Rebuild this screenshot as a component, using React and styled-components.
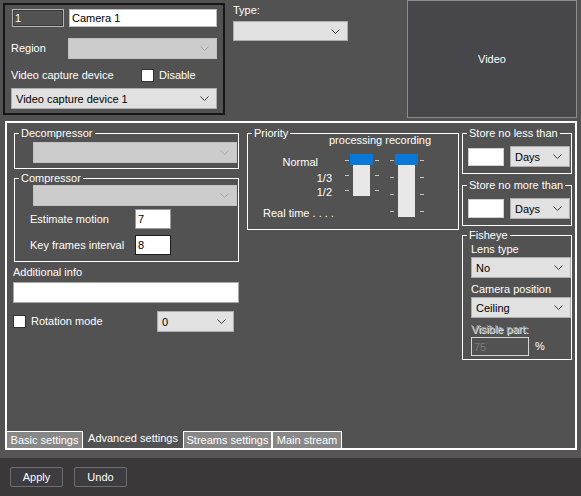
import React from 'react'
import styled, { createGlobalStyle } from 'styled-components'

const GlobalStyle = createGlobalStyle`
  html, body {
    margin: 0;
    padding: 0;
    background: #525252;
  }
  body {
    font-family: "Liberation Sans", Arial, sans-serif;
    font-size: 11px;
    color: #fff;
  }
`

const Window = styled.div`
  width: 581px;
  height: 496px;
  display: flex;
  flex-direction: column;
  background: #525252;
  overflow: hidden;
`

/* ---- top bar ---- */

const TopBar = styled.div`
  height: 121px;
  flex-shrink: 0;
  display: flex;
  align-items: flex-start;
`

const CameraBox = styled.div`
  margin: 3px 0 0 3px;
  width: 222px;
  height: 112px;
  box-sizing: border-box;
  border: 2px solid #161616;
  padding: 4px 6px 0 6px;
  display: flex;
  flex-direction: column;
`

const Row = styled.div`
  display: flex;
  align-items: center;
  margin-top: ${p => p.$mt || 0}px;
  justify-content: ${p => (p.$between ? 'space-between' : 'flex-start')};
`

const TypeBlock = styled.div`
  margin-left: 8px;
  padding-top: 4px;
  display: flex;
  flex-direction: column;
`

const VideoBox = styled.div`
  margin: 0 4px 0 auto;
  width: 170px;
  height: 118px;
  box-sizing: border-box;
  border: 1px solid #8b8b90;
  background: #47464b;
  display: flex;
  align-items: center;
  justify-content: center;
`

/* ---- generic controls ---- */

const Label = styled.div`
  line-height: 13px;
  white-space: nowrap;
  width: ${p => (p.$w ? `${p.$w}px` : 'auto')};
  margin-top: ${p => p.$mt || 0}px;
  margin-left: ${p => p.$ml || 0}px;
  color: ${p => (p.$disabled ? '#a3a3a3' : '#fff')};
  text-shadow: ${p => (p.$disabled ? '1px 1px 0 #f4f4f4' : 'none')};
`

const TextBox = styled.div`
  box-sizing: border-box;
  width: ${p => p.$w}px;
  height: ${p => p.$h || 20}px;
  margin-left: ${p => p.$ml || 0}px;
  margin-top: ${p => p.$mt || 0}px;
  padding-left: 2px;
  display: flex;
  align-items: center;
  background: ${p => (p.$tone === 'dark' ? 'transparent' : '#fff')};
  color: ${p => (p.$tone === 'dark' ? '#fff' : '#000')};
  border: 1px solid ${p => p.$border || '#a0a0a0'};
  box-shadow: ${p => (p.$tone === 'dark' ? 'inset 0 0 0 1px #3a3a3a' : 'none')};
  flex-shrink: 0;
`

const DisabledBox = styled(TextBox)`
  background: transparent;
  color: #7b7b7b;
  border-color: #d6d6d6;
  box-shadow: none;
`

const CheckBox = styled.div`
  width: 13px;
  height: 13px;
  box-sizing: border-box;
  background: #fff;
  border: 1px solid #333;
  flex-shrink: 0;
`

const SelectBox = styled.div`
  box-sizing: border-box;
  width: ${p => p.$w}px;
  height: ${p => p.$h || 21}px;
  margin-top: ${p => p.$mt || 0}px;
  margin-left: ${p => (p.$ml === 'auto' ? 'auto' : `${p.$ml || 0}px`)};
  margin-right: ${p => p.$mr || 0}px;
  padding: 0 7px 0 4px;
  display: flex;
  align-items: center;
  justify-content: space-between;
  background: ${p => (p.$disabled ? '#cccccc' : '#e1e1e1')};
  border: 1px solid ${p => (p.$disabled ? '#c2c2c2' : '#adadad')};
  color: #000;
  flex-shrink: 0;
  white-space: nowrap;
`

const Chevron = ({ disabled }) => (
  <svg width="9" height="5" viewBox="0 0 9 5">
    <polyline
      points="0.5,0.5 4.5,4.5 8.5,0.5"
      fill="none"
      stroke={disabled ? '#a8a8a8' : '#3c3c3c'}
      strokeWidth="1"
    />
  </svg>
)

function Dropdown({ value, disabled, ...rest }) {
  return (
    <SelectBox $disabled={disabled} {...rest}>
      <span>{value}</span>
      <Chevron disabled={disabled} />
    </SelectBox>
  )
}

/* ---- settings panel ---- */

const MainPanel = styled.div`
  margin: 0 4px 0 5px;
  height: 329px;
  flex-shrink: 0;
  box-sizing: border-box;
  border: 2px solid #fff;
  display: flex;
  flex-direction: column;
`

const Content = styled.div`
  flex: 1;
  display: flex;
  align-items: flex-start;
  padding: 10px 0 0 6px;
`

const Column = styled.div`
  width: ${p => p.$w}px;
  margin-left: ${p => p.$ml || 0}px;
  display: flex;
  flex-direction: column;
`

const GroupBox = styled.div`
  border: 1px solid #fff;
  display: flex;
  flex-direction: column;
  margin-top: ${p => p.$mt || 0}px;
  margin-left: ${p => p.$ml || 0}px;
`

const Legend = styled.div`
  align-self: flex-start;
  margin: -7px 0 0 4px;
  padding: 0 2px;
  line-height: 13px;
  background: #525252;
  white-space: nowrap;
`

const GroupBody = styled.div`
  display: flex;
  flex-direction: column;
  align-items: flex-start;
  padding: ${p => p.$pad || '0'};
`

const SliderHeader = styled.div`
  margin-top: -6px;
  padding-left: 81px;
  line-height: 13px;
  white-space: nowrap;
`

const SliderArea = styled.div`
  margin-top: 7px;
  display: flex;
  align-items: flex-start;
`

const ScaleLabels = styled.div`
  width: 97px;
  display: flex;
  flex-direction: column;
`

const ScaleLabel = styled.div`
  line-height: 14px;
  margin-top: ${p => p.$mt || 0}px;
  text-align: ${p => (p.$left ? 'left' : 'right')};
  padding: ${p => (p.$left ? '0 0 0 15px' : `0 ${p.$pr}px 0 0`)};
  white-space: nowrap;
`

const SliderBody = styled.div`
  height: ${p => p.$h}px;
  margin-left: ${p => p.$ml || 0}px;
  display: flex;
`

const Ticks = styled.div`
  width: 4px;
  box-sizing: border-box;
  padding: 6px 0 5px;
  display: flex;
  flex-direction: column;
  justify-content: space-between;

  span {
    display: block;
    height: 1px;
    background: #c6c6c6;
  }
`

const Well = styled.div`
  width: 23px;
  margin: 0 2px 0 1px;
  display: flex;
  flex-direction: column;
  align-items: center;
`

const Thumb = styled.div`
  width: 23px;
  height: 11px;
  background: #0a78d6;
`

const Track = styled.div`
  width: 17px;
  flex: 1;
  background: #e8e8e8;
`

function Slider({ height, ticks, ml }) {
  const marks = Array.from({ length: ticks }, (_, i) => <span key={i} />)
  return (
    <SliderBody $h={height} $ml={ml}>
      <Ticks>{marks}</Ticks>
      <Well>
        <Thumb />
        <Track />
      </Well>
      <Ticks>{marks}</Ticks>
    </SliderBody>
  )
}

const FieldRow = styled.div`
  align-self: stretch;
  display: flex;
  align-items: center;
  gap: ${p => p.$gap || 0}px;
  margin-top: ${p => p.$mt || 0}px;
`

const TabBar = styled.div`
  display: flex;
  align-items: flex-end;
  flex-shrink: 0;
`

const Tab = styled.div`
  box-sizing: border-box;
  width: ${p => p.$w}px;
  height: 17px;
  border: 1px solid ${p => (p.$active ? 'transparent' : '#fff')};
  border-bottom: none;
  background: ${p => (p.$active ? 'transparent' : '#878787')};
  text-align: center;
  line-height: ${p => (p.$active ? '12px' : '16px')};
  white-space: nowrap;

  &:first-child {
    border-left: none;
  }
`

/* ---- footer ---- */

const Strip = styled.div`
  height: 8px;
  flex-shrink: 0;
  background: #575555;
`

const Footer = styled.div`
  flex: 1;
  background: #3a3839;
  display: flex;
  align-items: flex-start;
  gap: 11px;
  padding: 9px 0 0 10px;
`

const Button = styled.div`
  box-sizing: border-box;
  width: 53px;
  height: 20px;
  border: 1px solid #6e6e72;
  border-radius: 2px;
  background: #3d3c41;
  display: flex;
  align-items: center;
  justify-content: center;
`

export default function App() {
  return (
    <Window>
      <GlobalStyle />
      <TopBar>
        <CameraBox>
          <Row>
            <TextBox $w={52} $h={18} $ml={1} $tone="dark" $border="#b4b4b4">1</TextBox>
            <TextBox $w={148} $h={18} $ml={5} $border="#bdbdbd">Camera 1</TextBox>
          </Row>
          <Row $mt={11} $between>
            <Label>Region</Label>
            <Dropdown disabled $w={149} />
          </Row>
          <Row $mt={10}>
            <Label $w={130}>Video capture device</Label>
            <CheckBox />
            <Label $ml={5}>Disable</Label>
          </Row>
          <Row $mt={6}>
            <Dropdown value="Video capture device 1" $w={206} />
          </Row>
        </CameraBox>

        <TypeBlock>
          <Label>Type:</Label>
          <Dropdown $w={115} $h={20} $mt={4} />
        </TypeBlock>

        <VideoBox>Video</VideoBox>
      </TopBar>

      <MainPanel>
        <Content>
          <Column $w={226}>
            <GroupBox $ml={1}>
              <Legend>Decompressor</Legend>
              <GroupBody $pad="2px 1px 5px 18px">
                <Dropdown disabled $w={204} />
              </GroupBody>
            </GroupBox>
            <GroupBox $ml={1} $mt={9}>
              <Legend>Compressor</Legend>
              <GroupBody $pad="0 1px 6px 15px">
                <Dropdown disabled $w={204} $ml={3} />
                <FieldRow $mt={3}>
                  <Label $w={105}>Estimate motion</Label>
                  <TextBox $w={36} $border="#9a9a9a">7</TextBox>
                </FieldRow>
                <FieldRow $mt={6}>
                  <Label $w={105}>Key frames interval</Label>
                  <TextBox $w={36} $border="#1e1e1e">8</TextBox>
                </FieldRow>
              </GroupBody>
            </GroupBox>
            <Label $mt={4}>Additional info</Label>
            <TextBox $w={226} $h={21} $mt={3} $border="#a8a8a8" />
            <FieldRow $mt={8}>
              <CheckBox />
              <Label $ml={5}>Rotation mode</Label>
              <Dropdown value="0" $w={77} $ml="auto" $mr={5} />
            </FieldRow>
          </Column>

          <Column $w={212} $ml={8}>
            <GroupBox>
              <Legend>Priority</Legend>
              <GroupBody $pad="0 0 9px 0">
                <SliderHeader>processing recording</SliderHeader>
                <SliderArea>
                  <ScaleLabels>
                    <ScaleLabel $mt={1} $pr={27}>Normal</ScaleLabel>
                    <ScaleLabel $mt={2} $pr={13}>1/3</ScaleLabel>
                    <ScaleLabel $pr={13}>1/2</ScaleLabel>
                    <ScaleLabel $mt={7} $left>Real time . . . .</ScaleLabel>
                  </ScaleLabels>
                  <Slider height={42} ticks={3} />
                  <Slider height={63} ticks={4} ml={11} />
                </SliderArea>
              </GroupBody>
            </GroupBox>
          </Column>

          <Column $w={110} $ml={3}>
            <GroupBox>
              <Legend>Store no less than</Legend>
              <GroupBody $pad="0 1px 6px 5px">
                <FieldRow $mt={6} $gap={6}>
                  <TextBox $w={36} $h={18} $border="#d0d0d0" />
                  <Dropdown value="Days" $w={60} />
                </FieldRow>
              </GroupBody>
            </GroupBox>
            <GroupBox $mt={11}>
              <Legend>Store no more than</Legend>
              <GroupBody $pad="0 1px 6px 5px">
                <FieldRow $mt={6} $gap={6}>
                  <TextBox $w={36} $h={19} $border="#d0d0d0" />
                  <Dropdown value="Days" $w={60} />
                </FieldRow>
              </GroupBody>
            </GroupBox>
            <GroupBox $mt={9}>
              <Legend>Fisheye</Legend>
              <GroupBody $pad="0 0 3px 8px">
                <Label $mt={1}>Lens type</Label>
                <Dropdown value="No" $w={100} $mt={1} />
                <Label $mt={5}>Camera position</Label>
                <Dropdown value="Ceiling" $w={100} $mt={1} />
                <Label $mt={5} $disabled>Visible part:</Label>
                <FieldRow $mt={1} $gap={6}>
                  <DisabledBox $w={58} $h={19}>75</DisabledBox>
                  <Label>%</Label>
                </FieldRow>
              </GroupBody>
            </GroupBox>
          </Column>
        </Content>

        <TabBar>
          <Tab $w={76}>Basic settings</Tab>
          <Tab $w={100} $active>Advanced settings</Tab>
          <Tab $w={89}>Streams settings</Tab>
          <Tab $w={70}>Main stream</Tab>
        </TabBar>
      </MainPanel>

      <Strip />
      <Footer>
        <Button>Apply</Button>
        <Button>Undo</Button>
      </Footer>
    </Window>
  )
}
